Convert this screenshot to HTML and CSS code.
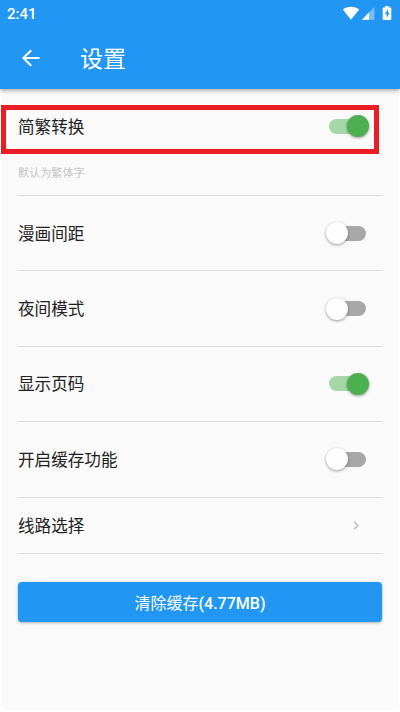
FILE: index.html
```html
<!DOCTYPE html>
<html lang="zh-CN">
<head>
<meta charset="utf-8">
<title>设置</title>
<link rel="stylesheet" href="styles.css">
</head>
<body>
<div class="screen">
  <header class="header">
    <div class="status">
      <span class="time">2:41</span>
      <svg class="status-icons" width="52" height="16" viewBox="0 0 52 16">
        <path d="M0.8 4.6C5.4.8 12.6.8 17.2 4.6L9 14.8z" fill="#fff"/>
        <path d="M20 14.8h12.4V2z" fill="#fff" opacity=".4"/>
        <path d="M20 14.8h7V7.2z" fill="#fff"/>
        <path d="M43 1h4v1.5h1.6q.7 0 .7.7v11q0 .7-.7.7h-7.200q-.7 0-.7-.7v-11q0-.7.7-.7H43z" fill="#fff"/>
        <path d="M46 4.300l-3.200 5h1.900v3.500l3-5h-1.700z" fill="#2196f3"/>
      </svg>
    </div>
    <div class="bar">
      <svg class="back" width="20" height="18" viewBox="0 0 20 18" fill="none" stroke="#fff" stroke-width="2"><path d="M18.500 9H2.500M10.200 1.200L2.400 9l7.800 7.800"/></svg>
      <h1 class="title">设置</h1>
    </div>
  </header>
  <main class="list">
    <section class="row first">
      <div class="line"><span class="label">简繁转换</span><span class="switch on"><i class="thumb"></i></span></div>
      <p class="hint">默认为繁体字</p>
    </section>
    <section class="row"><span class="label">漫画间距</span><span class="switch"><i class="thumb"></i></span></section>
    <section class="row"><span class="label">夜间模式</span><span class="switch"><i class="thumb"></i></span></section>
    <section class="row"><span class="label">显示页码</span><span class="switch on"><i class="thumb"></i></span></section>
    <section class="row"><span class="label">开启缓存功能</span><span class="switch"><i class="thumb"></i></span></section>
    <section class="row link"><span class="label">线路选择</span>
      <svg class="chevron" width="6" height="9" viewBox="0 0 6 9" fill="none" stroke="#bdbdbd" stroke-width="1.400"><path d="M1 .7l3.800 3.800L1 8.300"/></svg>
    </section>
    <button class="clear">清除缓存<span class="size">(4.77MB)</span></button>
  </main>
  <div class="highlight"></div>
</div>
</body>
</html>
```
FILE: styles.css
```css
* { box-sizing: border-box; }
body {
  margin: 0;
  font-family: Roboto, "Noto Sans CJK SC", sans-serif;
  color: #212121;
  background: #fafafa;
}
.screen {
  position: relative;
  height: 712px;
  border: solid #fff;
  border-width: 0 1px 2px 2px;
}
.header {
  height: 89px;
  margin: 0 -1px 0 -2px;
  background: #2196f3;
  color: #fff;
  box-shadow: 0 2px 4px rgba(0, 0, 0, .3);
}
.status {
  display: flex;
  align-items: center;
  justify-content: space-between;
  height: 28px;
  padding: 0 6px 0 7px;
}
.time { font-size: 15px; font-weight: 500; line-height: 28px; }
.status-icons { margin-top: -2px; }
.bar {
  display: flex;
  align-items: center;
  height: 61px;
  padding-left: 21px;
}
.back { margin-top: -2px; }
.title {
  margin: 2px 0 0 39px;
  font-size: 23px;
  font-weight: 400;
  line-height: 30px;
}
.list { padding: 0 17px 0 16px; font-size: 16.600px; line-height: 24px; }
.row {
  display: flex;
  align-items: center;
  justify-content: space-between;
  height: 75.400px;
  border-bottom: 1px solid #dcdcdc;
}
.first {
  flex-direction: column;
  align-items: stretch;
  justify-content: flex-start;
  height: 107px;
  padding-top: 25.300px;
}
.line {
  display: flex;
  align-items: center;
  justify-content: space-between;
  height: 24px;
}
.label { padding-top: 3px; }
.hint { margin: 28px 0 0; font-size: 11.100px; line-height: 16px; color: #c4c4c4; }
.switch {
  display: flex;
  align-items: center;
  width: 37px;
  height: 15px;
  margin-right: 16px;
  border-radius: 8px;
  background: #a8a8a8;
}
.thumb {
  flex: none;
  width: 22px;
  height: 22px;
  margin-left: -3px;
  border-radius: 50%;
  background: #fdfdfd;
  box-shadow: 0 1px 3px rgba(0, 0, 0, .4);
}
.on { background: #a5d7a7; }
.on .thumb { margin-left: 18px; background: #4caf50; }
.link { height: 56.500px; }
.chevron { margin-right: 23px; }
.clear {
  display: block;
  width: 100%;
  height: 40px;
  margin-top: 28.400px;
  padding: 3px 0 0;
  border: 0;
  border-radius: 4px;
  background: #2196f3;
  box-shadow: 0 1px 3px rgba(0, 0, 0, .3);
  color: #fff;
  font: 400 16px/24px Roboto, "Noto Sans CJK SC", sans-serif;
}
.size { font-weight: 500; }
/* Marker frame laid over the first setting */
.highlight {
  position: absolute;
  top: 105px;
  left: -1px;
  width: 378px;
  height: 49px;
  border: 5px solid #ea1c24;
}
```
